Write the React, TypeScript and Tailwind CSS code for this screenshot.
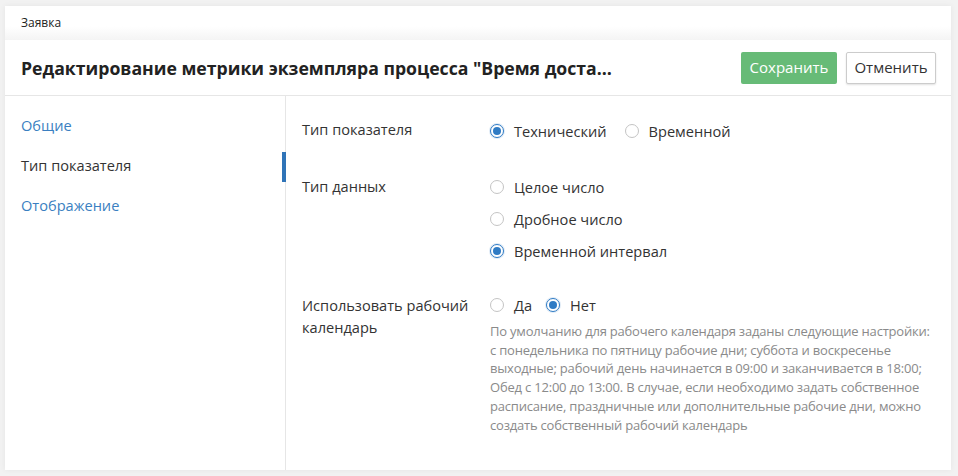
import React from "react";

function Radio({ checked, label }: { checked?: boolean; label: string }) {
  return (
    <div className="flex items-center gap-[10px]">
      <span
        className={
          checked
            ? "w-[14px] h-[14px] rounded-full border border-[#2f7bc4] flex items-center justify-center bg-white shadow-[0_0_0_1px_rgba(47,123,196,0.15)]"
            : "w-[14px] h-[14px] rounded-full border border-[#c4c4c4] bg-white"
        }
      >
        {checked && <span className="w-[8px] h-[8px] rounded-full bg-[#2f7bc4]" />}
      </span>
      <span className="text-[14.6px] leading-[20px] text-[#333]">{label}</span>
    </div>
  );
}

export default function App() {
  return (
    <div
      className="w-[958px] h-[476px] bg-[#f2f2f2] pt-[6px] pl-[5px] pr-[7px] pb-[6px]"
      style={{ fontFamily: '"Open Sans", "Noto Sans", sans-serif' }}
    >
      <div className="w-full h-full bg-white flex flex-col shadow-[0_0_6px_rgba(0,0,0,0.06)]">
        <div className="h-[34px] px-[16px] flex items-center text-[12px] text-[#222] bg-gradient-to-b from-white from-60% to-[#f4f4f4]">
          Заявка
        </div>
        <div className="h-[56px] flex items-center justify-between pl-[16px] pr-[15px] border-b border-[#e6e6e6]">
          <div className="w-[593px] truncate text-[17.65px] font-bold text-[#222] leading-[24px]">
            Редактирование метрики экземпляра процесса "Время доставки заявки"
          </div>
          <div className="flex items-center gap-[9px]">
            <button className="h-[32px] w-[96px] rounded-[2px] bg-[#67bb77] text-white text-[15px]">
              Сохранить
            </button>
            <button className="h-[32px] w-[90px] rounded-[2px] bg-white border border-[#cccccc] text-[#333] text-[15px] shadow-[0_1px_2px_rgba(0,0,0,0.12)]">
              Отменить
            </button>
          </div>
        </div>
        <div className="flex flex-1 min-h-0">
          <div className="w-[281px] shrink-0 border-r border-[#e6e6e6] pt-[15px] flex flex-col gap-[10px]">
            <div className="h-[30px] flex items-center pl-[16px] text-[14.6px] text-[#3a7fc1]">Общие</div>
            <div className="h-[30px] flex items-center pl-[16px] text-[14.6px] text-[#333] relative">
              Тип показателя
              <span className="absolute right-[-1px] top-[1px] w-[4px] h-[30px] bg-[#2f74b8]" />
            </div>
            <div className="h-[30px] flex items-center pl-[16px] text-[14.6px] text-[#3a7fc1]">Отображение</div>
          </div>
          <div className="flex-1 pl-[16px] pt-[23px] pr-[16px] text-[14.6px] text-[#333]">
            <div className="flex">
              <div className="w-[188px] shrink-0 leading-[20px]">Тип показателя</div>
              <div className="flex gap-[18px] pt-[2px]">
                <Radio checked label="Технический" />
                <Radio label="Временной" />
              </div>
            </div>
            <div className="flex mt-[35px]">
              <div className="w-[188px] shrink-0 leading-[20px]">Тип данных</div>
              <div className="flex flex-col gap-[12px] pt-[1px]">
                <Radio label="Целое число" />
                <Radio label="Дробное число" />
                <Radio checked label="Временной интервал" />
              </div>
            </div>
            <div className="flex mt-[33px]">
              <div className="w-[188px] shrink-0 leading-[22px]">
                Использовать рабочий
                <br />
                календарь
              </div>
              <div className="flex-1">
                <div className="flex gap-[14px] pt-[1px]">
                  <Radio label="Да" />
                  <Radio checked label="Нет" />
                </div>
                <p className="mt-[7px] text-[13px] tracking-[-0.2px] leading-[18.7px] text-[#8a8a8a] w-[446px]">
                  По умолчанию для рабочего календаря заданы следующие настройки: с понедельника по пятницу рабочие дни; суббота и воскресенье выходные; рабочий день начинается в 09:00 и заканчивается в 18:00; Обед с 12:00 до 13:00. В случае, если необходимо задать собственное расписание, праздничные или дополнительные рабочие дни, можно создать собственный рабочий календарь
                </p>
              </div>
            </div>
          </div>
        </div>
      </div>
    </div>
  );
}
